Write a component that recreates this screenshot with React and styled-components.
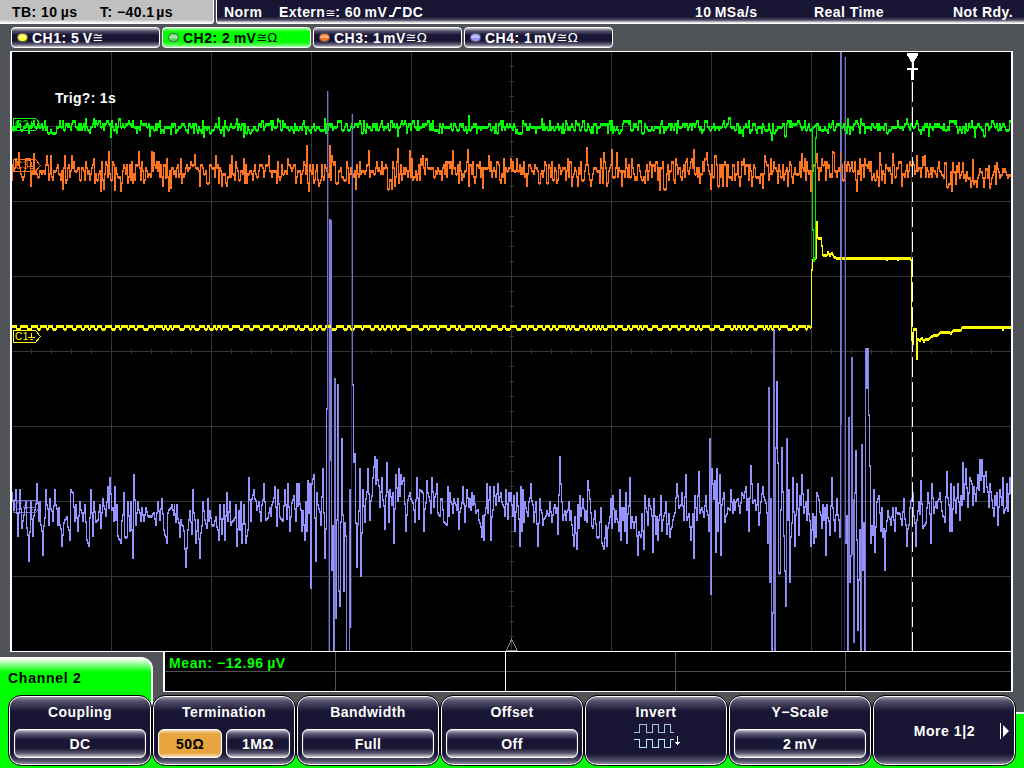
import styled, { createGlobalStyle } from "styled-components"

const GlobalStyle = createGlobalStyle`
    body{
        margin : 0;
        overflow : hidden;
        background : #505458;
    }
    *{
        box-sizing : border-box;
    }
`

const NAVY = "#191635"
const GREEN = "#00ff00"
const VIOLET = "#9492ff"

const Screen = styled.div`
    display : flex;
    flex-direction : column;
    width : 1024px;
    height : 768px;
    background : #505458;
    color : #fff;
    font : bold 14px/16px "Liberation Sans", Arial, sans-serif;
    letter-spacing : .45px;
    white-space : pre;
`

const StatusBar = styled.div`
    display : flex;
    gap : 2px;
    height : 24px;
`

const TimeBase = styled.div`
    display : grid;
    grid-template-columns : 88px auto;
    width : 214px;
    padding : 4px 0 0 12px;
    color : #000;
    background : linear-gradient(#c0c0c0 20px, #fff 23px);
    border-right : 1px solid #fff;
    border-bottom-right-radius : 3px;
`

const TriggerBar = styled.div`
    display : grid;
    grid-template-columns : 55px 416px 119px 139px auto;
    flex : 1;
    padding : 4px 0 0 7px;
    background : linear-gradient(${NAVY} 17px, #4c4a63 20px, #fff 23px);
    border-left : 1px solid #fff;
    border-bottom-left-radius : 3px;
`

const Sym = styled.span`
    font : normal ${p => p.$size || 14}px/14px "DejaVu Sans", sans-serif;
    letter-spacing : 0;
`

const Source = styled.span`
    display : flex;

    svg{
        margin : 2px 1px 0 2px;
    }
`

const ChannelBar = styled.div`
    display : flex;
    gap : 2px;
    height : 27px;
    padding : 3px 0 0 11px;
`

const ChannelButton = styled.div`
    display : flex;
    align-items : center;
    width : 149px;
    height : 21px;
    padding-left : 5px;
    border : 1px solid #fff;
    border-radius : 4px;
    letter-spacing : .5px;
    color : ${p => p.$active ? "#000" : "#fff"};
    background : ${p => p.$active
        ? `linear-gradient(#a0ffa0, ${GREEN} 4px, ${GREEN} 14px, #a0ffa0)`
        : `linear-gradient(#d0d0d8, #55536c 3px, ${NAVY} 7px, ${NAVY} 13px, #6c6a80 17px, #d8d8e0)`};
`

const Led = styled.i`
    width : 11px;
    height : 9px;
    margin-right : 4px;
    border : 1px solid #555;
    border-radius : 5px;
    background : linear-gradient(${p => p.$color}, #fff8 45%, ${p => p.$color} 65%), ${p => p.$color};
`

const Plot = styled.svg`
    display : block;
    width : 1024px;
    height : 601px;
    shape-rendering : crispEdges;
`

const Lower = styled.div`
    display : flex;
    justify-content : space-between;
    height : 43px;
    padding-right : 11px;
`

const Tab = styled.div`
    width : 153px;
    height : 38px;
    margin-top : 5px;
    padding : 12px 0 0 8px;
    color : #000;
    letter-spacing : .75px;
    background : linear-gradient(#fff, #d0ffd0 3px, ${GREEN} 14px);
    border-top : 1px solid #fff;
    border-right : 2px solid #fff;
    border-top-right-radius : 12px;
`

const Measure = styled.div`
    width : 850px;
    height : 40px;
    padding : 3px 0 0 4px;
    color : ${GREEN};
    letter-spacing : .6px;
    border : solid #fff;
    border-width : 0 2px 1px 2px;
    background :
        linear-gradient(#fff, #fff) 340px 0 / 1px 100% no-repeat,
        linear-gradient(#505050, #505050) 170px 0 / 1px 100% no-repeat,
        linear-gradient(#505050, #505050) 510px 0 / 1px 100% no-repeat,
        linear-gradient(#505050, #505050) 680px 0 / 1px 100% no-repeat,
        linear-gradient(#505050, #505050) 0 19px / 100% 1px no-repeat,
        #000;
`

const SoftKeys = styled.div`
    display : flex;
    height : 73px;
    padding-left : 8px;
    background :
        linear-gradient(#fff, #fff) 151px 0 / 2px 10px no-repeat,
        linear-gradient(${GREEN}, ${GREEN}) 0 0 / 151px 100% no-repeat,
        linear-gradient(#fff, #fff) 1008px 17px / 16px 2px no-repeat,
        linear-gradient(${GREEN}, ${GREEN}) 1008px 19px / 16px 60px no-repeat,
        linear-gradient(#505458 60px, ${GREEN} 60px);
`

const Key = styled.div`
    display : flex;
    flex-direction : column;
    align-items : center;
    width : 144px;
    height : 71px;
    padding : 8px 4px 0;
    border : 1px solid #000;
    border-radius : 13px;
    background : linear-gradient(#a5a4b2, #55536c 5px, ${NAVY} 15px, ${NAVY} 58px, #55536c 65px, #a5a4b2);
    box-shadow : inset 0 0 0 1px #fff;
`

const Values = styled.div`
    display : flex;
    gap : 4px;
    width : 132px;
    margin-top : 9px;
`

const Value = styled.div`
    flex : 1;
    height : 29px;
    padding-top : 6px;
    text-align : center;
    border : 1px solid #fff;
    border-radius : 6px;
    color : ${p => p.$selected ? "#000" : "#fff"};
    background : ${p => p.$selected
        ? "linear-gradient(#f4dcb4, #e6a53f 4px, #e6a53f 23px, #f8e4c4)"
        : `linear-gradient(#c0c0ca, #55536c 4px, ${NAVY} 10px, ${NAVY} 18px, #55536c 23px, #c8c8d0)`};
    box-shadow : inset 0 0 1px #fff;
`

const More = styled.div`
    display : flex;
    align-items : center;
    justify-content : flex-end;
    width : 100%;
    height : 54px;
    gap : 25px;
    padding-right : 1px;
    letter-spacing : .55px;
`

const InvertIcon = styled.svg`
    width : 48px;
    height : 26px;
    margin : 3px 0 0 3px;
    fill : none;
    shape-rendering : crispEdges;
`

// Captured sample peaks of channel 4, in thirds of a pixel from each block's origin
const CH4_BLOCKS = [
    [0, 430, `36,190 42,240 48,182 54,320 60,182 66,295 72,255 78,217 87,395 93,217 99,320 111,163 117,275 120,217 129,375
    138,182 147,285 150,208 159,275 165,182 174,285 177,235 186,350 192,280 200,262 210,330 213,182 219,190 225,275 228,226
    234,303 240,217 249,275 255,226 261,330 267,350 273,182 279,320 282,217 288,278 294,270 300,226 303,295 309,208 318,260
    324,172 327,235 330,145 336,240 339,235 342,275 345,172 348,270 351,226 354,320 363,340 372,190 375,322 381,322 384,217 390,303 393,217 399,385 402,136
    408,285 414,217 423,275 426,235 432,275 438,235 444,258 456,258 462,250 468,285 474,217 480,270 486,208 492,300 501,340 504,250
    516,226 522,255 523,226 528,278 531,226 540,322 543,272 552,303 558,412 564,300 570,244 576,312 579,182 588,340 594,270 600,385
    609,217 615,270 621,295 624,208 627,275 630,244 636,285 642,285 648,262 657,330 660,226 666,312 672,226 675,330 681,190 684,275 690,217
    693,285 705,265 708,226 711,350 717,244 720,300 723,217 726,340 732,226 738,340 744,300 747,145 753,275 756,208 762,182 771,240 777,217
    783,275 792,163 798,270 804,265 810,235 813,260 825,172 831,290 834,182 840,262 849,275 855,182 861,268 864,163 870,303
    876,220 882,200 888,275 891,163 894,230 897,163 906,303 909,244 915,330 918,217 921,303 924,154 927,250 930,163 933,475 936,163 942,136
    948,395 951,190 963,285 969,118 975,385`],
    [290, 350, `108,537 111,177 114,-774 118,903 121,-390 124,330 126,660 129,528 132,903 135,88 138,805 141,510 144,105 147,725 150,770 155,267
    161,725 165,520 168,560 170,1010 178,1010 180,420 183,832 186,-705 190,105 192,337 194,312 197,520 201,652 210,357 213,680 219,420 225,517 234,357
    240,510 249,384 255,321 258,402 261,330 270,473 276,384 285,537 291,339 297,517 300,420 306,465 309,430 312,580 318,375
    324,455 327,357 330,438 334,375 336,402 342,384 348,545 354,450 360,430 372,480 375,517 381,384 387,508 390,420 399,430
    402,545 411,393 423,490 426,384 432,473 441,402 444,490 450,500 453,447 456,447 462,517 471,527 474,411 477,500 480,430 489,490 492,447
    500,480 504,447 507,537 519,411 525,517 531,420 537,473 540,447 543,482 546,430 549,465 552,438 558,490 564,480 576,563 579,500 582,572
    591,402 594,490 600,411 603,572 612,411 618,465 624,402 627,455 633,430 645,500 648,420 654,508 657,430 660,455 663,430 669,500
    672,438 675,545 681,430 687,508 690,590 693,411 696,545 699,420 702,517 705,457`],
    [500, 430, `78,235 84,260 93,163 102,278 108,217 114,350 120,208 129,285 141,244 147,260 150,217 156,278 162,235 165,226 168,250 171,235 174,312
    180,82 183,163 189,270 195,244 198,270 207,217 210,270 213,244 216,285 222,350 225,262 231,358 234,226 237,295 240,199 243,260 249,208 255,270 258,244 261,278
    264,154 270,208 276,290 279,295 285,244 291,322 297,322 303,235 306,340 312,358 318,290 321,350 333,208 336,295 339,199
    345,278 348,244 357,303 360,182 363,330 366,235 369,270 372,235 375,303 378,190 381,340 390,145 393,295 396,262 402,295 408,262 414,376 417,308
    423,322 426,253 432,358 435,199 444,285 447,208 456,260 459,367 462,208 468,312 471,262 474,330 483,199 486,303 498,217 501,312
    507,253 510,322 519,270 525,250 531,163 537,235 543,226 546,190 552,270 558,136 561,270 567,253 573,330 579,253 582,385 585,199 591,270
    597,127 600,250 606,235 612,262 618,199 627,303 630,28 633,494 636,118 642,208 645,154 648,367 651,118 654,303 660,136
    663,376 666,226 672,190 675,278 684,235 690,240 693,182 699,250 702,210 705,240 708,217 714,208 720,250 726,190 732,205 738,172 741,240 744,208 747,303 753,109
    759,220 765,210 768,240 771,226 774,163 777,285 782,216`],
    [740, 320, `69,502 81,580 84,670 87,205 90,788 93,538 96,992 99,880 102,30 105,992 108,384 111,186 114,430 117,760 121,760 126,384
    132,650 138,860 141,357 144,600 147,510 150,788 159,475 165,680 171,492 177,645 180,528 183,555 186,465 192,580 198,547 201,600 204,510 213,680
    219,582 222,670 225,592 228,652 231,520 237,540 246,625 249,555 252,600 255,565 258,707 261,555 270,645 276,475 280,565
    285,635 291,537 300,652 304,-804 307,1010 313,1010 316,-786 318,670 321,590 324,992 327,295 330,788 333,708 336,115 342,968 345,520 348,393
    354,932 360,630 363,992 366,375 369,752 372,610 375,992 378,88 380,205 384,88 387,285 391,438 393,670 396,618 399,645 402,510 405,698
    411,547 417,528 423,635 426,565 429,652 432,628 435,752 438,635 444,573 453,617 459,565 465,635 468,565 471,580 480,582 486,617 492,537 501,680
    510,565 520,520 528,680 531,600 537,547 540,582 543,484 549,625 558,610 564,520 570,582 573,670 576,492 582,580 588,547
    592,565 600,520 606,573 615,608 621,457 630,635 633,492 636,635 642,502 648,580 654,492 660,600 663,528 666,555 669,430
    672,537 678,447 684,563 690,475 696,492 699,555 702,502 708,545 714,465 717,510 720,420 723,482 727,420 732,517 735,470 738,457
    747,563 750,492 756,540 762,590 765,528 768,555 771,520 774,617 780,510 786,555 789,475 793,580 798,565 801,492 804,573 810,475 813,520`]
]

const ch4 = CH4_BLOCKS.flatMap(([ox, oy, text]) => text.trim().split(/\s+/).map(pair => {
    const [x, y] = pair.split(",").map(Number)
    return [Math.round(ox + x / 3), oy + y / 3]
}))

const ch1Pulse = [
    [810, 327], [811, 327], [812, 270], [813, 260], [816, 258], [817, 222], [818, 238], [821, 238], [823, 255], [827, 255], [828, 252], [830, 256],
    [832, 253], [834, 257], [836, 258], [886, 258], [887, 260], [888, 258], [897, 258], [898, 260], [899, 258], [910, 258], [911, 260],
    [912, 340], [913, 344], [914, 329], [916, 329], [917, 359], [918, 339], [920, 341], [922, 338], [924, 342], [925, 340], [929, 339], [933, 336],
    [938, 335], [940, 333], [949, 332], [951, 334], [953, 331], [961, 330], [963, 327], [1002, 327], [1003, 330], [1004, 327], [1012, 327]
]

const ch2Spikes = { 86: 119, 94: 119, 111: 137, 119: 119, 120: 119, 171: 134, 204: 137, 237: 119, 244: 137, 278: 119, 306: 134, 325: 119, 469: 116, 542: 119, 772: 140, 848: 119, 850: 134, 861: 119, 907: 119, 921: 134, 975: 137 }
const ch3Spikes = {
    31: 186, 34: 154, 101: 191, 104: 189, 109: 152, 115: 190, 121: 191, 139: 152, 152: 152, 166: 178, 169: 191, 171: 188, 195: 155, 200: 186, 227: 186,
    307: 146, 309: 191, 330: 146, 369: 151, 398: 149, 410: 151, 453: 151, 468: 150, 483: 188, 527: 186, 587: 148, 612: 150, 660: 190, 694: 150, 763: 188, 802: 154,
    811: 191, 817: 154, 833: 152, 857: 191, 893: 154, 923: 157, 952: 191, 973: 160, 990: 188
}

const rng = (seed) => () => {
    seed = (seed * 1103515245 + 12345) % 2147483648
    return seed / 2147483648
}

const noise = (seed, base, spread, hold, spikes) => {
    const rand = rng(seed)
    const points = []
    let offset = 0
    for (let x = 12; x <= 1011; x++) {
        if (rand() > hold) offset = Math.round((rand() + rand() + rand() - 1.5) * spread / 3) * 3
        points.push([x, spikes[x] || base(x) + offset])
    }
    return points
}

const ch1Base = () => {
    const rand = rng(77)
    const points = []
    let x = 12
    let high = true
    while (x < 811) {
        const len = high ? 2 + Math.floor(rand() * 6) : 2 + Math.floor(rand() * 4)
        for (let i = 0; i < len && x < 811; i++) points.push([x++, high ? 326.5 : 329.5])
        high = !high
    }
    return points
}

const ch2 = noise(21, () => 127, 6.5, .2, ch2Spikes).filter(([x]) => x < 812 || x > 816)
const ch3 = noise(58, x => x > 940 ? 175 : 171, 14, .12, ch3Spikes)
const ch2Dip = [[812, 128], [813, 230], [814, 261], [815, 258], [816, 138], [817, 127]]

const linear = t => t
// Leaves a peak quickly and lingers half way to the next one
const peaked = t => .3 * t + .7 * (.5 + 4 * (t - .5) ** 3)

// One vertical bar for every pixel column, never shorter than the pen
const columns = (points, ease = linear, keep = () => true) => {
    const pen = 3
    let d = ""
    for (let i = 1; i < points.length; i++) {
        const [x0, y0] = points[i - 1]
        const [x1, y1] = points[i]
        const n = Math.max(1, x1 - x0)
        for (let k = 0; k < n; k++) {
            const a = y0 + (y1 - y0) * ease(k / n)
            const b = y0 + (y1 - y0) * ease((k + 1) / n)
            const top = Math.round(Math.min(a, b) - pen / 2)
            const bottom = Math.max(top + pen, Math.round(Math.max(a, b) + pen / 2 - 1))
            if (keep(bottom - top)) d += `M${x0 + k + .5} ${top}V${bottom}`
        }
    }
    return d
}

const range = (from, to, step) => {
    const list = []
    for (let v = from; v <= to; v += step) list.push(v)
    return list
}

const gridPath = [
    ...range(111, 911, 100).map(x => `M${x + .5} 52V651`),
    ...range(126, 576, 75).map(y => `M12 ${y + .5}H1011`),
    ...range(31, 991, 20).map(x => `M${x + .5} 349V354`),
    ...range(66, 636, 15).map(y => `M509 ${y + .5}H514`)
].join("")

const ChannelTag = ({ y, label, color, opacity }) => (
    <g opacity={opacity} stroke={color} fill="none">
        <path d={`M13.5 ${y + .5}H35.5L40.5 ${y + 6.5}L35.5 ${y + 12.5}H13.5Z`} />
        <text x="15" y={y + 10} fill={color} stroke="none" fontSize="10" fontWeight="normal" fontFamily="Liberation Sans, Arial, sans-serif">{label}</text>
        <path d={`M31.5 ${y + 3}V${y + 8}M28 ${y + 7.5}H35M30 ${y + 9.5}H33`} />
    </g>
)

const Display = () => (
    <Plot viewBox="0 51 1024 601">
        <rect x="10" y="51" width="1003" height="601" fill="#fff" />
        <rect x="12" y="52" width="999" height="599" fill="#000" />
        <path d={gridPath} stroke="#363636" />
        <svg x="12" y="52" width="999" height="599" viewBox="12 52 999 599">
            {/* the faster the beam moves, the darker it gets */}
            <path d={columns(ch4, peaked, h => h > 500)} stroke="#2a2952" />
            <path d={columns(ch4, peaked, h => h > 140 && h <= 500)} stroke="#7f7dd8" />
            <path d={columns(ch4, peaked, h => h <= 140)} stroke={VIOLET} />
            <path d={columns(ch3)} stroke="#ff7420" />
            <path d={columns(ch1Base())} stroke="#ffff00" />
            <path d={columns(ch1Pulse)} stroke="#ffff00" />
            <path d={columns(ch2)} stroke={GREEN} />
            <path d={columns(ch2Dip)} stroke="#00e800" />
            <path d="M841.5 52V425M845.5 58V540" stroke="#6a69b4" />
            <path d="M327.5 92V410M352.5 115V385" stroke="#7473c4" />
            <path d="M331.5 220V560M335.5 380V618M338.5 385V590M774.5 331V650M852.5 358V555M868.5 349V415" stroke="#7f7dd8" />
        </svg>
        <ChannelTag y={118} label="C2" color={GREEN} />
        <ChannelTag y={159} label="C3" color="#ff7420" />
        <ChannelTag y={330} label="C1" color="#ffff00" />
        <ChannelTag y={500} label="C4" color={VIOLET} opacity={.75} />
        <path d="M912.5 82V651" stroke="#fff" strokeDasharray="20 5" />
        <path d="M907 53H918V55L913.5 63V68H918V70H914V80H911V70H907V68H912V63L907 55Z" fill="#fff" />
        <path d="M511.5 639.5L506.5 650H517Z" stroke="#888" fill="none" />
        <text x="55" y="103" fill="#fff" fontSize="14" letterSpacing=".3">Trig?: 1s</text>
    </Plot>
)

const channels = [
    { name: "CH1: 5\u2009V", color: "#ffff20", sym: "≅" },
    { name: "CH2: 2\u2009mV", color: "#60d860", sym: "≅Ω", active: true },
    { name: "CH3: 1\u200AmV", color: "#ff7420", sym: "≅Ω" },
    { name: "CH4: 1\u200AmV", color: VIOLET, sym: "≅Ω" }
]

const SoftKey = ({ title, values, selected }) => (
    <Key>
        <span>{title}</span>
        <Values>
            {values.map(value => <Value key={value} $selected={value === selected}>{value}</Value>)}
        </Values>
    </Key>
)

export default function App() {
    return (<Screen>
        <GlobalStyle />
        <StatusBar>
            <TimeBase>
                <span>TB: 10{"\u2009"}µs</span>
                <span>T: −40.1{"\u200A"}µs</span>
            </TimeBase>
            <TriggerBar>
                <span>Norm</span>
                <Source>
                    <span>Extern<Sym $size={12}>≅</Sym>: 60{"\u2009"}mV</span>
                    <svg width="12" height="12" fill="none" stroke="#fff" strokeWidth="2">
                        <path d="M0 10H4L7 2H12" />
                    </svg>
                    <span>DC</span>
                </Source>
                <span>10{"\u2009"}MSa/s</span>
                <span>Real Time</span>
                <span>Not Rdy.</span>
            </TriggerBar>
        </StatusBar>
        <ChannelBar>
            {channels.map(({ name, color, sym, active }) => (
                <ChannelButton key={name} $active={active}>
                    <Led $color={color} />
                    {name}
                    <Sym $size={13}>{sym}</Sym>
                </ChannelButton>
            ))}
        </ChannelBar>
        <Display />
        <Lower>
            <Tab>Channel 2</Tab>
            <Measure>Mean: −12.96{"\u2009"}µV</Measure>
        </Lower>
        <SoftKeys>
            <SoftKey title="Coupling" values={["DC"]} />
            <SoftKey title="Termination" values={["50Ω", "1MΩ"]} selected="50Ω" />
            <SoftKey title="Bandwidth" values={["Full"]} />
            <SoftKey title="Offset" values={["Off"]} />
            <Key>
                <span>Invert</span>
                <InvertIcon>
                    <path d="M0 9.5H5.5V1.5H12.5V9.5H18.5V1.5H24.5V9.5H30.5V1.5H36.5V9.5H40" stroke="#a4c4ec" />
                    <path d="M0 16.5H5.5V24.5H12.5V16.5H18.5V24.5H24.5V16.5H30.5V24.5H36.5V16.5H40" stroke="#b8ecf8" />
                    <path d="M43.5 13V22M41 19.5H46M42 20.5H45" stroke="#fff" />
                </InvertIcon>
            </Key>
            <SoftKey title="Y−Scale" values={["2\u2009mV"]} />
            <Key>
                <More>
                    <span>More 1|2</span>
                    <svg width="10" height="16" fill="#fff">
                        <path d="M0 0H1V16H0ZM3 2L9 8L3 14Z" />
                    </svg>
                </More>
            </Key>
        </SoftKeys>
    </Screen>)
}
